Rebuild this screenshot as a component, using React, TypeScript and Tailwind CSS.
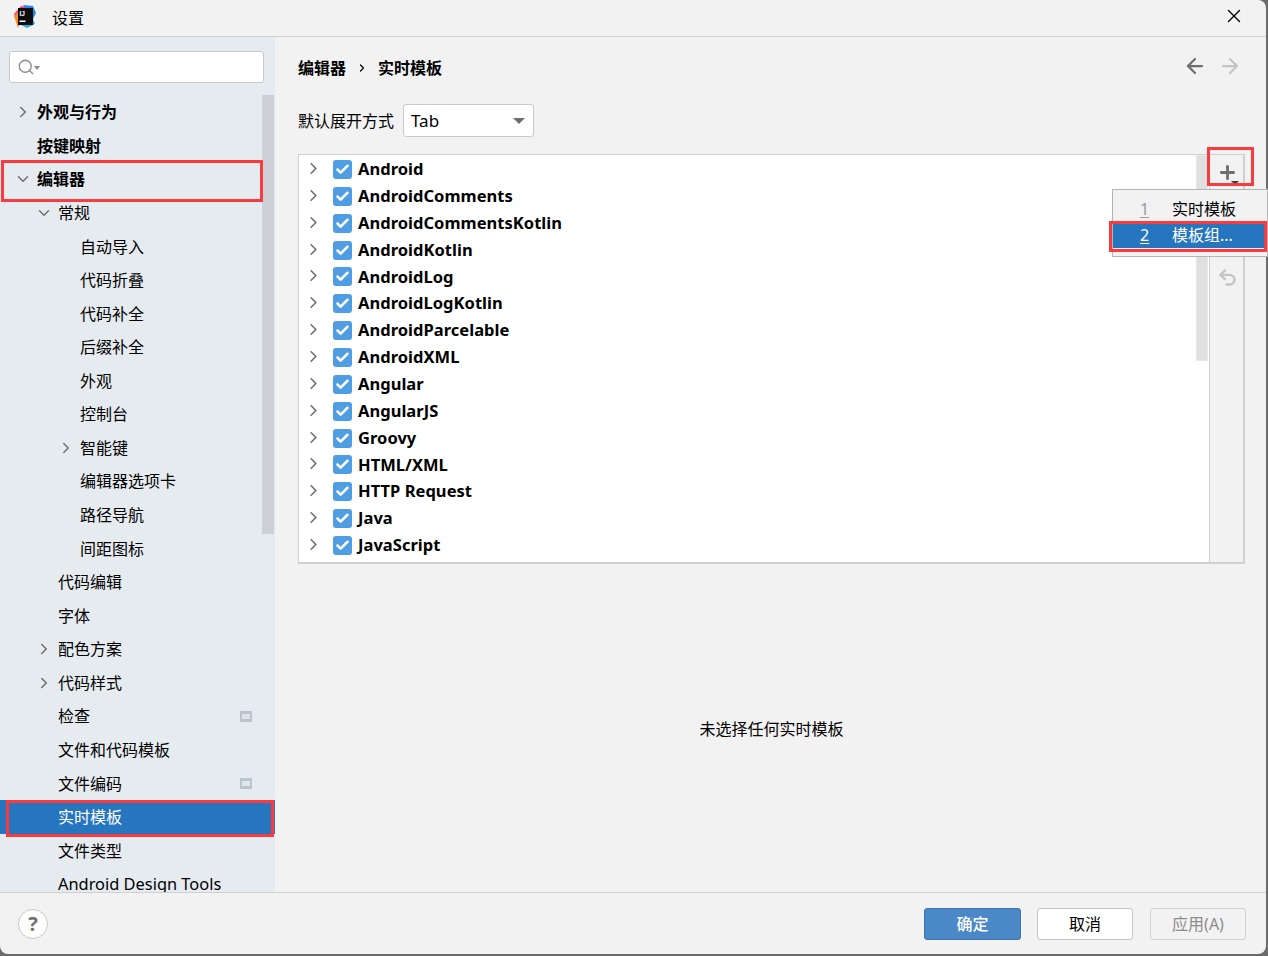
import React from "react";
import { ChevronRight, ChevronDown, ArrowLeft, ArrowRight, Check, X, Plus, Undo2, Search } from "lucide-react";

const FONT = "font-['Noto_Sans','Noto_Sans_CJK_SC',sans-serif]";

interface NavItem {
  label: string;
  indent: number;
  arrow?: "right" | "down";
  bold?: boolean;
  active?: boolean;
  badge?: boolean;
}

const navItems: NavItem[] = [
  { label: "外观与行为", indent: 0, arrow: "right", bold: true },
  { label: "按键映射", indent: 0, bold: true },
  { label: "编辑器", indent: 0, arrow: "down", bold: true },
  { label: "常规", indent: 1, arrow: "down" },
  { label: "自动导入", indent: 2 },
  { label: "代码折叠", indent: 2 },
  { label: "代码补全", indent: 2 },
  { label: "后缀补全", indent: 2 },
  { label: "外观", indent: 2 },
  { label: "控制台", indent: 2 },
  { label: "智能键", indent: 2, arrow: "right" },
  { label: "编辑器选项卡", indent: 2 },
  { label: "路径导航", indent: 2 },
  { label: "间距图标", indent: 2 },
  { label: "代码编辑", indent: 1 },
  { label: "字体", indent: 1 },
  { label: "配色方案", indent: 1, arrow: "right" },
  { label: "代码样式", indent: 1, arrow: "right" },
  { label: "检查", indent: 1, badge: true },
  { label: "文件和代码模板", indent: 1 },
  { label: "文件编码", indent: 1, badge: true },
  { label: "实时模板", indent: 1, active: true },
  { label: "文件类型", indent: 1 },
  { label: "Android Design Tools", indent: 1 },
];

const templateGroups = [
  "Android",
  "AndroidComments",
  "AndroidCommentsKotlin",
  "AndroidKotlin",
  "AndroidLog",
  "AndroidLogKotlin",
  "AndroidParcelable",
  "AndroidXML",
  "Angular",
  "AngularJS",
  "Groovy",
  "HTML/XML",
  "HTTP Request",
  "Java",
  "JavaScript",
];

const indentClass = ["pl-[37px]", "pl-[58px]", "pl-[80px]"];
const arrowClass = ["left-[14px]", "left-[35px]", "left-[57px]"];

const IdeaLogo = () => (
  <svg width="24" height="24" viewBox="0 0 24 24">
    <path d="M1 9 L8 1 L15 2 L12 12 L5 20 Z" fill="#f5417d" />
    <path d="M1 11 L6 6 L7 18 L5 23 Z" fill="#ff8a1f" />
    <path d="M10 0 L20 1 L23 8 L20 14 Z" fill="#1f8ceb" />
    <path d="M8 20 L20 14 L22 19 L14 23 Z" fill="#2ea8e8" />
    <rect x="5" y="3" width="15" height="17" fill="#0c0c0f" />
    <text x="6.5" y="10.5" fill="#fff" fontSize="6.5" fontWeight="700" fontFamily="Liberation Sans, sans-serif">
      IJ
    </text>
    <rect x="6.5" y="15.5" width="6" height="1.5" fill="#fff" />
  </svg>
);

const NavRow = ({ item }: { item: NavItem }) => (
  <div
    className={`relative flex h-[33.57px] shrink-0 items-center pr-[23px] whitespace-nowrap text-[16px] ${indentClass[item.indent]} ${
      item.active ? "bg-[#2675bf] text-white" : "text-black"
    } ${item.bold ? "font-bold" : ""}`}
  >
    {item.arrow === "right" && (
      <ChevronRight className={`absolute size-[18px] text-[#6e6e6e] ${arrowClass[item.indent]}`} strokeWidth={2} />
    )}
    {item.arrow === "down" && (
      <ChevronDown className={`absolute size-[18px] text-[#6e6e6e] ${arrowClass[item.indent]}`} strokeWidth={2} />
    )}
    <span className={item.label.startsWith("Android") ? "text-[16.4px]" : ""}>{item.label}</span>
    {item.badge && (
      <span className="ml-auto flex h-[11px] w-[12px] items-center justify-center bg-[#b9c4cd]">
        <span className="h-[5px] w-[8px] bg-[#dfe5ea]" />
      </span>
    )}
  </div>
);

const TemplateRow = ({ name }: { name: string }) => (
  <div className="relative flex h-[26.87px] shrink-0 items-center pl-[34px]">
    <ChevronRight className="absolute left-[5px] top-[3px] size-[19px] text-[#6e6e6e]" strokeWidth={2} />
    <span className="flex size-[19px] items-center justify-center rounded-[3px] bg-[#4f9ee3]">
      <Check className="size-[15px] text-white" strokeWidth={4} />
    </span>
    <span className="ml-[6px] text-[16.5px] leading-none font-bold tracking-[0.03px] text-black">{name}</span>
  </div>
);

export default function App() {
  return (
    <div className={`relative h-[956px] w-[1268px] overflow-hidden bg-[#6b6b6b] ${FONT}`}>
      <div className="flex h-[954px] w-[1266px] flex-col overflow-hidden rounded-b-[8px] rounded-tr-[8px] bg-[#f2f2f2]">
        {/* Title bar */}
        <div className="flex h-[37px] shrink-0 items-center border-b border-[#d0d0d0] pb-[2px] pl-[13px] pr-[21px]">
          <IdeaLogo />
          <span className="ml-[15px] mt-[2px] text-[16px] text-black">设置</span>
          <X className="-mt-[2px] ml-auto size-[22px] text-black" strokeWidth={1.5} />
        </div>

        <div className="flex min-h-0 flex-1">
          {/* Sidebar */}
          <div className="relative flex w-[275px] shrink-0 flex-col overflow-hidden bg-[#e6ebf0]">
            <div className="mx-[9px] mt-[14px] flex h-[32px] w-[255px] shrink-0 items-center rounded-[3px] border border-[#c9c9c9] bg-white pl-[7px]">
              <Search className="size-[18px] text-[#8c8c8c]" strokeWidth={1.75} />
              <span className="ml-[-1px] mt-[1px] h-0 w-0 border-x-[3px] border-t-[4px] border-x-transparent border-t-[#8c8c8c]" />
            </div>
            <div className="mt-[12.5px] flex min-h-0 flex-1 flex-col overflow-hidden">
              {navItems.map((item) => (
                <NavRow key={item.label} item={item} />
              ))}
            </div>
            {/* scroll thumb */}
            <div className="absolute left-[262px] top-[58px] h-[439px] w-[12px] bg-[#cdd1d5]" />
          </div>

          {/* Main panel */}
          <div className="flex min-w-0 flex-1 flex-col pl-[23px] pr-[21px]">
            <div className="mt-[19px] flex h-[24px] items-center text-[16px] font-bold text-black">
              <span>编辑器</span>
              <ChevronRight className="ml-[10px] mr-[10px] size-[12px] text-black" strokeWidth={2.5} />
              <span>实时模板</span>
              <ArrowLeft className="-mt-[4px] ml-auto size-[24px] text-[#6e6e6e]" strokeWidth={2.25} />
              <ArrowRight className="-mt-[4px] ml-[11px] mr-[3px] size-[24px] text-[#c4c4c4]" strokeWidth={2.25} />
            </div>

            <div className="mt-[24px] flex items-center text-[16px] text-black">
              <span>默认展开方式</span>
              <div className="ml-[9px] flex h-[33px] w-[131px] items-center justify-between rounded-[3px] border border-[#c9c9c9] bg-white pl-[7px] pr-[8px]">
                <span className="text-[17px]">Tab</span>
                <span className="h-0 w-0 border-x-[6px] border-t-[6px] border-x-transparent border-t-[#6e6e6e]" />
              </div>
            </div>

            {/* Template tree with its toolbar */}
            <div className="mt-[17px] flex h-[410px] shrink-0 border border-b-2 border-r-2 border-[#d0d0d0]">
              <div className="relative min-w-0 flex-1 overflow-hidden bg-white pt-[1px]">
                {templateGroups.map((name) => (
                  <TemplateRow key={name} name={name} />
                ))}
                <span className="absolute left-[34px] top-[407px] size-[19px] rounded-[3px] bg-[#4f9ee3]" />
                <div className="absolute right-[1px] top-0 h-[206px] w-[12px] border border-[#e8e8e8] bg-[#e0e0e0]" />
              </div>
              <div className="flex w-[34px] shrink-0 flex-col items-center border-l border-[#d0d0d0] bg-[#f2f2f2]">
                <Plus className="ml-[2px] mt-[7px] size-[21px] text-[#6e6e6e]" strokeWidth={3.25} />
                <Undo2 className="ml-[2px] mt-[84px] size-[21px] text-[#c4c4c4]" strokeWidth={2.75} />
              </div>
            </div>

            <div className="flex flex-1 items-center justify-center pt-[2px] text-[16px] text-black">
              未选择任何实时模板
            </div>
          </div>
        </div>

        {/* Footer */}
        <div className="flex h-[62px] shrink-0 items-center border-t border-[#d0d0d0] pl-[18px] pr-[20px]">
          <span className="flex size-[30px] items-center justify-center rounded-full border border-[#c9c9c9] bg-white text-[20px] font-bold text-[#6e6e6e]">
            ?
          </span>
          <button className="ml-auto mt-[1px] h-[32px] w-[97px] rounded-[3px] border border-[#3f74ad] bg-[#4a88c7] text-[16px] font-medium text-white">
            确定
          </button>
          <button className="ml-[16px] mt-[1px] h-[32px] w-[96px] rounded-[3px] border border-[#c4c4c4] bg-white text-[16px] text-black">
            取消
          </button>
          <button className="ml-[17px] mt-[1px] h-[32px] w-[96px] rounded-[3px] border border-[#d0d0d0] bg-[#f2f2f2] text-[16px] text-[#8c8c8c]">
            应用(A)
          </button>
        </div>
      </div>

      {/* Dropdown under the plus button */}
      <div className="absolute left-[1112px] top-[189px] h-[68px] w-[156px] border border-[#b4b4b4] bg-[#f2f2f2] pt-[7px] text-[16px]">
        <div className="flex h-[24px] items-center pl-[27px] text-black">
          <span className="w-[32px] text-[#9a9a9a] underline underline-offset-2">1</span>
          <span>实时模板</span>
        </div>
        <div className="flex h-[27px] items-center bg-[#2675bf] pl-[27px] text-white">
          <span className="w-[32px] underline underline-offset-2">2</span>
          <span>模板组...</span>
        </div>
      </div>
      <span className="absolute left-[1231px] top-[181px] h-0 w-0 border-x-[4px] border-t-[4px] border-x-transparent border-t-[#3c3c3c]" />

      {/* Red annotation boxes */}
      <div className="absolute left-[1px] top-[160px] h-[42px] w-[262px] border-[3px] border-[#fb3a3f]" />
      <div className="absolute left-[6px] top-[800px] h-[37px] w-[268px] border-[3px] border-[#fb3a3f]" />
      <div className="absolute left-[1207px] top-[147px] h-[39px] w-[47px] border-[3px] border-[#fb3a3f]" />
      <div className="absolute left-[1109px] top-[221px] h-[31px] w-[158px] border-[3px] border-[#fb3a3f]" />
    </div>
  );
}
